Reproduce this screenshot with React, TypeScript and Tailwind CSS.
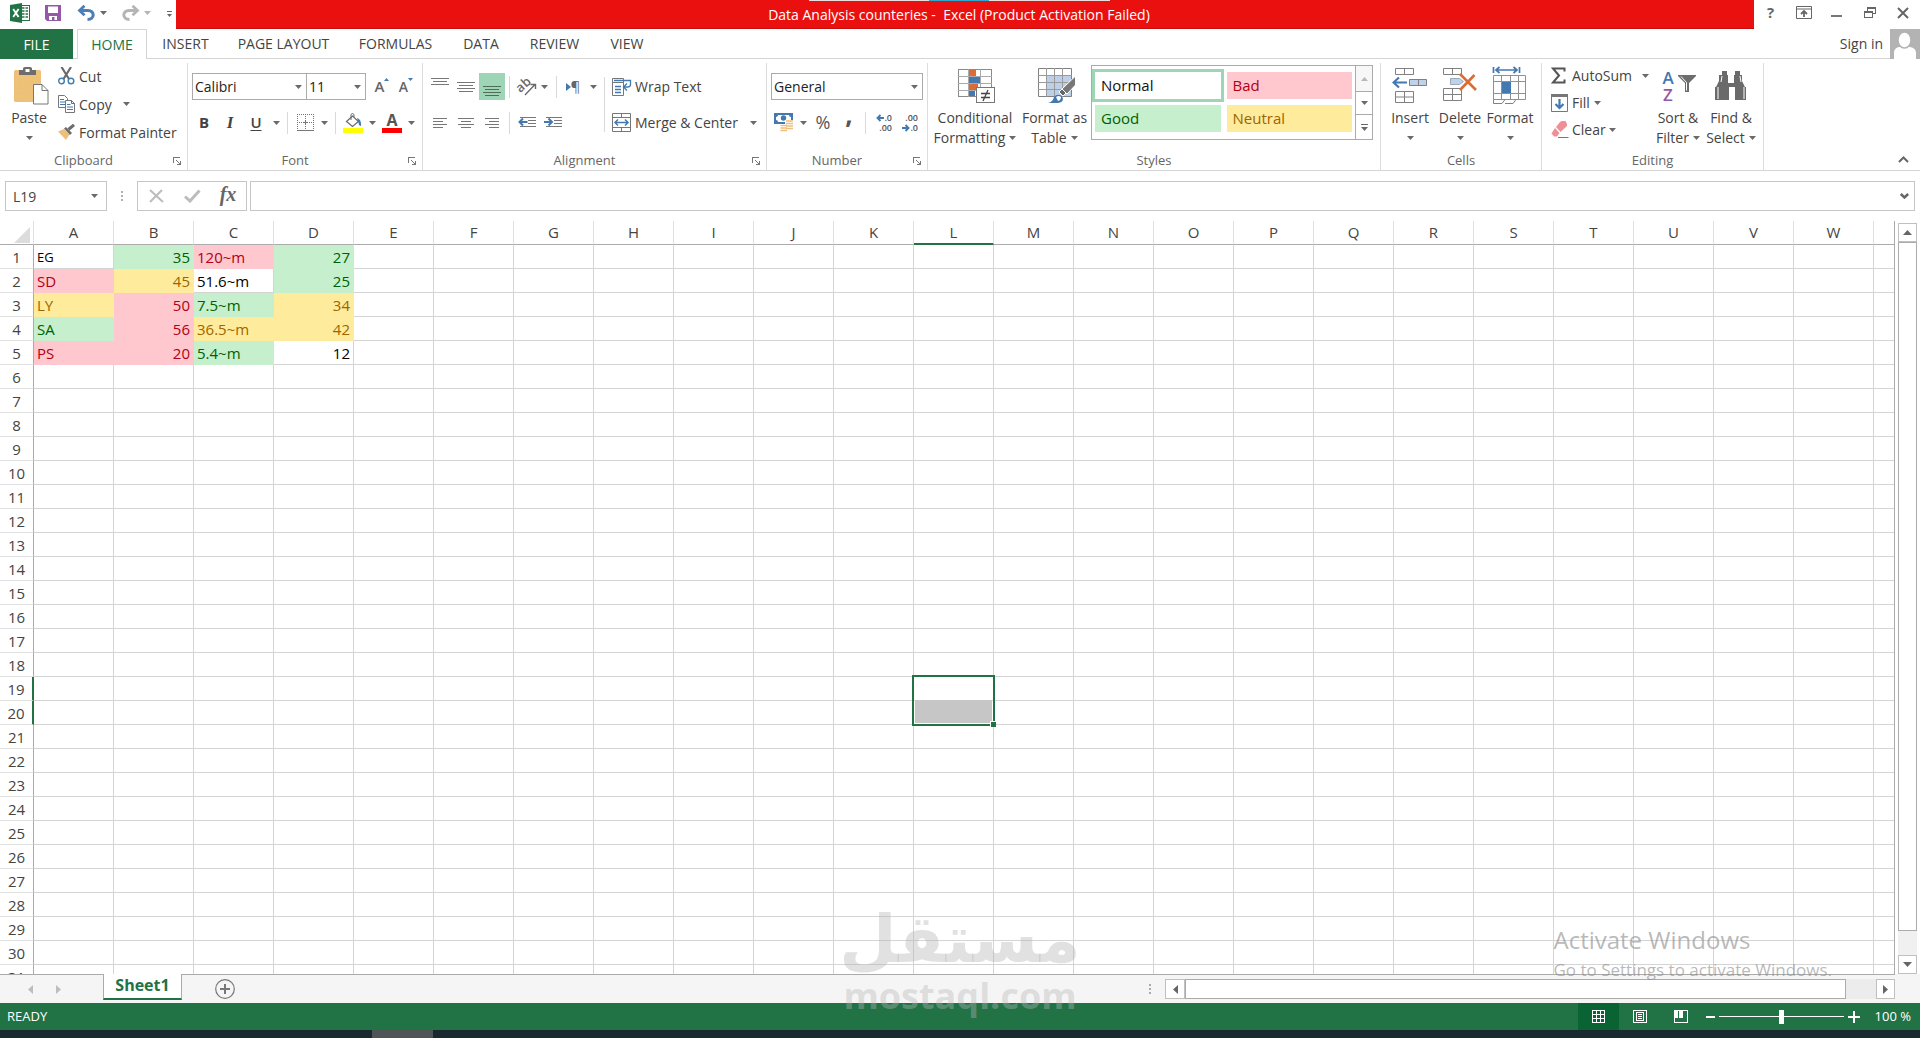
import type { ReactNode } from "react";

/* ---------- small shared pieces ---------- */

const Caret = ({ className = "text-[#6a6a6a]" }: { className?: string }) => (
  <svg width="7" height="4" viewBox="0 0 7 4" className={`shrink-0 ${className}`} aria-hidden="true">
    <path d="M0 0h7L3.5 4z" fill="currentColor" />
  </svg>
);

const Sep = ({ className = "" }: { className?: string }) => (
  <span className={`h-[22px] w-px shrink-0 bg-[#d9d9d9] ${className}`} />
);

const IconButton = ({ label, className = "w-[26px]", children }: { label: string; className?: string; children: ReactNode }) => (
  <button type="button" aria-label={label} className={`flex h-[27px] shrink-0 items-center justify-center ${className}`}>
    {children}
  </button>
);

const Group = ({ title, className, launcher = true, children }: { title: string; className: string; launcher?: boolean; children: ReactNode }) => (
  <section aria-label={title} className={`flex shrink-0 flex-col pt-1 ${className}`}>
    <div className="flex flex-1 border-r border-[#dcdcdc]">{children}</div>
    <div className="flex h-[22px] items-center border-r border-[#dcdcdc] pt-1 text-[13px] text-[#666]">
      <span className="flex-1 text-center">{title}</span>
      {launcher && (
        <button type="button" aria-label={`${title} settings`} className="flex w-5 justify-center">
          <svg width="8" height="8" viewBox="0 0 8 8" shapeRendering="crispEdges" stroke="#777" fill="none">
            <path d="M0 .5h7M.5 0v6M3 3l4 4M7.5 4v4M4 7.5h4" />
          </svg>
        </button>
      )}
    </div>
  </section>
);

const BigButton = ({ icon, line1, line2, className }: { icon: ReactNode; line1: string; line2?: string; className: string }) => (
  <button type="button" className={`flex shrink-0 flex-col items-center text-[14px] leading-5 whitespace-nowrap text-[#444] ${className}`}>
    <span className="flex h-[45px] items-center justify-center">{icon}</span>
    <span>{line1}</span>
    <span className="flex h-5 items-center gap-1">
      {line2}
      <Caret />
    </span>
  </button>
);

const Combo = ({ label, value, className }: { label: string; value: string; className: string }) => (
  <span className={`relative flex h-[27px] shrink-0 border border-[#ababab] bg-white ${className}`}>
    <select aria-label={label} defaultValue={value} className="w-full appearance-none bg-transparent pl-0.5 text-[14px] text-[#222] outline-none">
      <option>{value}</option>
    </select>
    <Caret className="pointer-events-none absolute top-[11px] right-1 text-[#6a6a6a]" />
  </span>
);

/* ---------- drawings ---------- */

const ExcelLogo = () => (
  <svg width="20" height="20" viewBox="0 0 20 20" aria-hidden="true">
    <rect x="10.5" y="2.5" width="9" height="15" fill="#fff" stroke="#217346" />
    <path d="M12 5h2.500M12 8h2.500M12 11h2.500M12 14h2.500M15.500 5H18M15.500 8H18M15.500 11H18M15.500 14H18" stroke="#217346" strokeWidth="1.600" />
    <path d="M0 2 12 0v20L0 18z" fill="#217346" />
    <path d="M3.200 6 8.600 14M8.600 6 3.200 14" stroke="#fff" strokeWidth="1.900" />
  </svg>
);

const SaveIcon = () => (
  <svg width="16" height="16" viewBox="0 0 16 16" aria-hidden="true">
    <path d="M0 0h16v16H2l-2-2z" fill="#9557a8" />
    <path d="M3 1.500h10V8H3zM4 11h8v4H9.500v-3H7v3H4z" fill="#fff" />
  </svg>
);

const UndoIcon = ({ color, flip = false }: { color: string; flip?: boolean }) => (
  <svg width="19" height="16" viewBox="0 0 19 16" aria-hidden="true" className={flip ? "-scale-x-100" : ""}>
    <path d="M2.500 5.500h8.500c7 0 7 9-0.500 9" fill="none" stroke={color} strokeWidth="3" />
    <path d="M7.500.8 2.500 5.500l5 4.700" fill="none" stroke={color} strokeWidth="2.800" />
  </svg>
);

const PasteIcon = () => (
  <svg width="35" height="38" viewBox="0 0 35 38" className="ml-1" aria-hidden="true">
    <rect x="0" y="3" width="27" height="32" rx="1.500" fill="#efc07a" />
    <path d="M3 9h22M3 14h22M3 19h22M3 24h15M3 29h15" stroke="#e2cf62" strokeWidth="1.500" strokeDasharray="1.500 4" />
    <path d="M5 3h4V1.500Q9 0 11 0h5q2 0 2 1.500V3h4v5H5z" fill="#6d6d6d" />
    <rect x="11.500" y="2" width="4" height="3" fill="#fff" />
    <path d="M19.500 17.500h8.500l6 6v13.500H19.500z" fill="#fff" stroke="#777" />
    <path d="M28 17.500v6h6" fill="none" stroke="#777" />
  </svg>
);

const CutIcon = () => (
  <svg width="17" height="18" viewBox="0 0 17 18" fill="none" aria-hidden="true">
    <path d="M3.500 0 11 12M13 0 5.500 12" stroke="#6a6a6a" strokeWidth="2.200" />
    <circle cx="3.500" cy="14" r="2.800" stroke="#3e7fae" strokeWidth="1.400" />
    <circle cx="13" cy="14" r="2.800" stroke="#3e7fae" strokeWidth="1.400" />
  </svg>
);

const CopyIcon = () => (
  <svg width="17" height="18" viewBox="0 0 17 18" aria-hidden="true">
    <path d="M.5.5h6l3 3v9h-9z" fill="#fff" stroke="#777" />
    <path d="M2 4.500h4M2 7h5M2 9.500h5" stroke="#4478b0" />
    <path d="M7.500 5.500h6l3 3v9h-9z" fill="#fff" stroke="#777" />
    <path d="M13.500 5.500v3h3M9 9.500h3.500M9 12h6M9 14.500h6" stroke="#4478b0" fill="none" />
  </svg>
);

const PainterIcon = () => (
  <svg width="17" height="16" viewBox="0 0 17 16" aria-hidden="true">
    <path d="M0 7.500 6 5l5.500 5.500L8 16z" fill="#eebf78" />
    <path d="M6 4.500 8 3l6 6-2 2z" fill="#6d6d6d" />
    <path d="M10.500 5.500 16 .8" stroke="#6d6d6d" strokeWidth="3" />
  </svg>
);

const BordersIcon = () => (
  <svg width="17" height="17" viewBox="0 0 17 17" shapeRendering="crispEdges" stroke="#777" aria-hidden="true">
    <path d="M0 .5h17M.5 0v16M16.500 0v16M0 8.500h17M8.500 0v16" strokeDasharray="1 1" />
    <path d="M0 16.500h17M7 8.500h3M8.500 7v3" />
  </svg>
);

const FillColorIcon = () => (
  <svg width="20" height="20" viewBox="0 0 20 20" aria-hidden="true">
    <path d="M3.500 8.500 9.500 3l6 5.500-6 5z" fill="#fff" stroke="#6a6a6a" strokeWidth="1.200" />
    <path d="M8 7V1.500Q9.500-.5 11 1.500V4" fill="none" stroke="#6a6a6a" />
    <path d="M14 5q4.500 1 4 8-2 0-2.500-3z" fill="#4478b0" />
    <path d="M0 15h20v5H0z" fill="#ff0" />
  </svg>
);

const Lines = ({ d, active = false }: { d: string; active?: boolean }) => (
  <svg width="18" height="18" viewBox="0 0 18 18" shapeRendering="crispEdges" stroke={active ? "#4f6b5c" : "#777"} aria-hidden="true">
    <path d={d} />
  </svg>
);

const OrientationIcon = () => (
  <svg width="20" height="19" viewBox="0 0 20 19" className="overflow-visible" aria-hidden="true">
    <text x="1" y="14" transform="rotate(-42 5 12)" fontSize="13" fontWeight="600" fill="#6a6a6a">ab</text>
    <path d="M8 18 18 7.500M13.500 7.500H18.500V12" fill="none" stroke="#6a6a6a" strokeWidth="1.400" />
  </svg>
);

const IndentIcon = ({ out = false }: { out?: boolean }) => (
  <svg width="19" height="12" viewBox="0 0 19 12" aria-hidden="true">
    <path d="M2 .5h16M10 3.500h8M10 6.500h8M2 9.500h16" stroke="#777" shapeRendering="crispEdges" />
    <path d={out ? "M1.500 5h8M5 1.500 1.500 5 5 8.500" : "M0 5h8M4.500 1.500 8 5 4.500 8.500"} stroke="#4478b0" strokeWidth="2" fill="none" />
  </svg>
);

const WrapIcon = () => (
  <svg width="20" height="18" viewBox="0 0 20 18" fill="none" aria-hidden="true">
    <path d="M.5 .5h11v4H.5zM.5 4.500h11v13H.5z" stroke="#777" />
    <path d="M2 2.500h16.500v4q0 2.500-3 2.500H12M15 5.500 11.500 9l3.500 3.500M3 8.500h6M3 11.500h6M3 14.500h6" stroke="#4478b0" strokeWidth="1.300" />
  </svg>
);

const MergeIcon = () => (
  <svg width="20" height="19" viewBox="0 0 20 19" fill="none" aria-hidden="true">
    <path d="M.5.5h18v18H.5zM.5 4.500h18M.5 14.500h18M9.500.5v4M9.500 14.500v4" stroke="#777" />
    <path d="M3 9.500h13M6 6.500l-3 3 3 3M13 6.500l3 3-3 3" stroke="#4478b0" strokeWidth="1.500" />
  </svg>
);

const MoneyIcon = () => (
  <svg width="20" height="19" viewBox="0 0 20 19" aria-hidden="true">
    <path d="M0 0h19v11H0z" fill="#4478b0" />
    <path d="M2 4q2 0 2-2h11q0 2 2 2v3q-2 0-2 2H4q0-2-2-2z" fill="#fff" />
    <circle cx="9.500" cy="5" r="2.700" fill="#4478b0" />
    <path d="M11 7h8v10h-5v2H6v-8h5z" fill="#fff" />
    <path d="M12 8h7M12 10.500h7M12 13h7M12 15.500h7M6.500 12.500H13M6.500 15H13M6.500 17.500H13" stroke="#efbf7b" strokeWidth="1.700" />
  </svg>
);

const DecimalIcon = ({ grow = false }: { grow?: boolean }) => {
  const arrow = (
    <svg width="8" height="8" viewBox="0 0 8 8" fill="none" stroke="#4478b0" strokeWidth="1.900" aria-hidden="true">
      <path d={grow ? "M1 4h7M4.500 1 1.500 4l3 3" : "M0 4h7M3.500 1l3 3-3 3"} />
    </svg>
  );
  return (
    <span className="flex w-[18px] flex-col text-[9px] leading-[10px] font-semibold text-[#555]">
      <span className="flex items-center justify-end">{grow && arrow}{grow ? ".0" : ".00"}</span>
      <span className="flex items-center justify-end">{!grow && arrow}{grow ? ".00" : ".0"}</span>
    </span>
  );
};

const ConditionalIcon = () => (
  <svg width="38" height="36" viewBox="0 0 38 36" shapeRendering="crispEdges" className="ml-1" aria-hidden="true">
    <path d="M.5 1.500h33v27H.5z" fill="#fff" stroke="#8a8a8a" />
    <path d="M0 8.500h34M0 15.500h34M0 22.500h34M10.500 1v28M22.500 1v28" stroke="#aaa" />
    <path d="M11 2h7v6h-7zM11 16h9v6h-9z" fill="#dc6b35" />
    <path d="M11 9h11v6H11zM11 23h6v5h-6z" fill="#4478b0" />
    <path d="M18.500 19.500h18v15h-18z" fill="#fff" stroke="#777" />
    <path d="M23 25.500h9M23 29.500h9M30 22l-5 11" stroke="#444" strokeWidth="1.300" shapeRendering="auto" />
  </svg>
);

const TableIcon = () => (
  <svg width="38" height="36" viewBox="0 0 38 36" className="ml-1" aria-hidden="true">
    <path d="M.5.5h33v28H.5z" fill="#fff" stroke="#808080" />
    <path d="M9 8h24v20H9z" fill="#bdd0e9" />
    <path d="M0 7.500h34M0 14.500h34M0 21.500h34M8.500 0v29M16.500 0v29M24.500 0v29" stroke="#9a9a9a" />
    <path d="M37.500 8v9L29 26l-5-5z" fill="#777" stroke="#fff" />
    <path d="M24 21l4 4-3 3-4-4z" fill="#666" stroke="#fff" />
    <path d="M10 35q5-1 6-6 3-4 8-1 3 6-4 7z" fill="#4478b0" />
    <path d="M18 29q3-2 5 0 0 3-3 4z" fill="#fff" />
  </svg>
);

const InsertCellsIcon = () => (
  <svg width="36" height="38" viewBox="0 0 36 38" fill="none" aria-hidden="true">
    <path d="M3.500 1.500h18v6h-18zM12.500 1.500v6M3.500 24.500h18v11h-18zM12.500 24.500v11M3.500 30h18" stroke="#808080" />
    <path d="M17.500 12.500h17v6h-17z" fill="#bfd2ea" stroke="#808080" />
    <path d="M26.500 12.500v6" stroke="#808080" />
    <path d="M1.500 15.500H15M7 10.500l-5.500 5 5.500 5" stroke="#4478b0" strokeWidth="2.200" />
  </svg>
);

const DeleteCellsIcon = () => (
  <svg width="36" height="38" viewBox="0 0 36 38" fill="none" aria-hidden="true">
    <path d="M1.500 1.500h18v6h-18zM10.500 1.500v6M1.500 21.500h18v12h-18zM10.500 21.500v12M1.500 27.500h18" stroke="#808080" />
    <path d="M8.500 11.500h9l4 3-4 3h-9z" fill="#bfd2ea" stroke="#9aa9ba" />
    <path d="M18 7 34 23M32.500 8 18 23" stroke="#dc6b35" strokeWidth="2.600" />
  </svg>
);

const FormatCellsIcon = () => (
  <svg width="36" height="40" viewBox="0 0 36 40" fill="none" aria-hidden="true">
    <path d="M1.500 1v6M27.500 1v6M4 4h21M7.500 1 4 4l3.500 3M21.500 1 25 4l-3.500 3" stroke="#4478b0" strokeWidth="1.700" />
    <path d="M1.500 9.500h32v24h-32zM1.500 15.500h32M1.500 27.500h32M9.500 9.500v24M18.500 9.500v24M26.500 9.500v24" stroke="#909090" />
    <path d="M10 16h9v11h-9z" fill="#4478b0" />
    <path d="M1.500 33.500v4H10l3-4M13 37.500h8l3-4" stroke="#808080" />
  </svg>
);

const SigmaIcon = () => (
  <svg width="16" height="17" viewBox="0 0 16 17" aria-hidden="true">
    <path d="M13.500 4.500V1.500H2l6 7-6 7h11.500v-3" fill="none" stroke="#555" strokeWidth="2" />
  </svg>
);

const FillDownIcon = () => (
  <svg width="17" height="18" viewBox="0 0 17 18" fill="none" aria-hidden="true">
    <path d="M.5.5h16v17H.5z" stroke="#777" />
    <path d="M0 1.500h17" stroke="#777" strokeWidth="3" />
    <path d="M8.500 5v9M4.500 10l4 4 4-4" stroke="#4478b0" strokeWidth="2.200" />
  </svg>
);

const EraserIcon = () => (
  <svg width="18" height="17" viewBox="0 0 18 17" aria-hidden="true">
    <path d="M9 1q1-1 2.500-1h3L16 3v2L9.500 11 5 6z" fill="#ee9096" />
    <path d="M4 7l4.500 5L6 15.500H3L.5 12.500z" fill="#ee9096" />
    <path d="M7 16.500h10.500" stroke="#777" />
  </svg>
);

const SortIcon = () => (
  <span className="flex items-center gap-0.5">
    <span className="flex w-4 flex-col text-center text-[17px] leading-[17px] font-semibold">
      <span className="text-[#4478b0]">A</span>
      <span className="text-[#9557a8]">Z</span>
    </span>
    <svg width="18" height="17" viewBox="0 0 18 17" className="mb-1" aria-hidden="true">
      <path d="M0 0h18v1l-7 7v9H7V8L0 1z" fill="#6d6d6d" />
      <path d="M3 1.500 8.500 7.500v8" stroke="#fff" fill="none" />
    </svg>
  </span>
);

const BinocularsIcon = () => (
  <svg width="34" height="32" viewBox="0 0 34 32" fill="#6a6a6a" aria-hidden="true">
    <path d="M8 1h5v4h1v8h6V5h1V1h5v4h2v6l3 6h1v13h-11V17h-6v13H1V17h1l3-6V5h3z" />
    <path d="M4 17v12M30 17v12M8 6l-1 6M26 6l1 6M15 11.500h4" stroke="#fff" fill="none" />
  </svg>
);

/* ---------- title bar and tabs ---------- */

const TitleBar = () => (
  <header className="flex h-[29px] shrink-0 bg-white">
    <div className="flex w-44 shrink-0 items-center pb-1 pl-2.5">
      <ExcelLogo />
      <button type="button" aria-label="Save" className="ml-[15px]"><SaveIcon /></button>
      <button type="button" aria-label="Undo" className="ml-4 flex items-center gap-1"><UndoIcon color="#4b7eb8" /><Caret /></button>
      <button type="button" aria-label="Redo" className="ml-3.5 flex items-center gap-1"><UndoIcon color="#b5b5b5" flip /><Caret className="text-[#b5b5b5]" /></button>
      <button type="button" aria-label="Customize toolbar" className="ml-4 flex flex-col items-center gap-0.5 pt-0.5">
        <span className="h-px w-[5px] bg-[#666]" />
        <svg width="5" height="3" viewBox="0 0 5 3" aria-hidden="true"><path d="M0 0h5L2.500 3z" fill="#666" /></svg>
      </button>
    </div>
    <div className="relative flex flex-1 items-center justify-center border-b border-[#c60d0d] bg-[#eb1010] pr-3 text-[14px] whitespace-pre text-white">
      <div className="absolute inset-x-0 top-0 flex h-px justify-center pr-3">
        <span className="w-[120px] bg-[#ecdcdc]" />
        <span className="w-[60px] bg-[#2fa8cf]" />
        <span className="w-[121px] bg-[#ecdcdc]" />
      </div>
      <h1>{"Data Analysis counteries -  Excel (Product Activation Failed)"}</h1>
    </div>
    <div className="flex w-[166px] shrink-0 items-center pb-1 text-[#666]">
      <button type="button" aria-label="Help" className="w-[33px] text-[15px] leading-none font-bold">?</button>
      <button type="button" aria-label="Ribbon display options" className="flex w-[33px] justify-center">
        <svg width="16" height="13" viewBox="0 0 16 13" fill="none" stroke="#666" aria-hidden="true">
          <path d="M.5.5h15v12H.5zM.5 3h15" /><path d="M8 11V5.500M5 8l3-3 3 3" strokeWidth="1.800" />
        </svg>
      </button>
      <button type="button" aria-label="Minimize" className="flex w-[33px] justify-center pt-1.5"><span className="h-0.5 w-[11px] bg-[#777]" /></button>
      <button type="button" aria-label="Restore" className="flex w-[33px] justify-center">
        <svg width="12" height="11" viewBox="0 0 12 11" fill="none" stroke="#666" shapeRendering="crispEdges" aria-hidden="true">
          <path d="M.5 4.500h8v6h-8zM0 5.500h9M3.500 4V.5h8v6H9M3 1.500h9" />
        </svg>
      </button>
      <button type="button" aria-label="Close" className="flex w-[33px] justify-center">
        <svg width="12" height="12" viewBox="0 0 12 12" stroke="#666" strokeWidth="2" aria-hidden="true"><path d="M1 1l10 10M11 1 1 11" /></svg>
      </button>
    </div>
  </header>
);

const tabs = [
  { name: "INSERT", width: "w-[77px]" },
  { name: "PAGE LAYOUT", width: "w-[119px]" },
  { name: "FORMULAS", width: "w-[105px]" },
  { name: "DATA", width: "w-[66px]" },
  { name: "REVIEW", width: "w-[81px]" },
  { name: "VIEW", width: "w-[64px]" },
];

const TabBar = () => (
  <nav className="flex h-[30px] shrink-0 text-[14px] text-[#444]">
    <button type="button" className="w-[73px] bg-[#217346] text-white">FILE</button>
    <span className="w-1 border-b border-[#d5d5d5]" />
    <button type="button" className="w-[70px] border-x border-t border-[#d5d5d5] pb-px text-[#217346]">HOME</button>
    {tabs.map((t) => (
      <button type="button" key={t.name} className={`border-b border-[#d5d5d5] whitespace-nowrap ${t.width}`}>{t.name}</button>
    ))}
    <span className="flex-1 border-b border-[#d5d5d5]" />
    <button type="button" className="border-b border-[#d5d5d5] pr-[7px]">Sign in</button>
    <svg width="30" height="30" viewBox="0 0 30 30" role="img" aria-label="Account">
      <path d="M0 0h30v30H0z" fill="#b3b3b3" />
      <path d="M4 30v-6q0-5 5-6h11q6 1 6 6v6z" fill="#fff" />
      <ellipse cx="14.500" cy="11" rx="6.500" ry="8" fill="#fff" stroke="#b3b3b3" strokeWidth="1.500" />
    </svg>
  </nav>
);

/* ---------- ribbon ---------- */

const Ribbon = () => (
  <div className="flex h-28 shrink-0 border-b border-[#d5d5d5] text-[14px] text-[#444]">
    <Group title="Clipboard" className="w-[188px]">
      <BigButton className="w-[58px]" icon={<PasteIcon />} line1="Paste" />
      <div className="flex flex-col whitespace-nowrap">
        <button type="button" className="flex h-7 items-center gap-1 pb-0.5"><CutIcon />Cut</button>
        <button type="button" className="flex h-7 items-center gap-1 pb-0.5"><CopyIcon />Copy<span className="w-[3px]" /><Caret /></button>
        <button type="button" className="flex h-7 items-center gap-1 pb-0.5"><PainterIcon />Format Painter</button>
      </div>
    </Group>

    <Group title="Font" className="w-[235px]">
      <div className="flex flex-col gap-[9px] pt-2.5 pl-1">
        <div className="flex">
          <Combo label="Font" value="Calibri" className="w-[115px]" />
          <Combo label="Font size" value="11" className="-ml-px w-[60px]" />
          <IconButton label="Increase font size" className="ml-1 w-6">
            <span className="text-[15px] leading-none font-semibold text-[#666]">A</span>
            <svg width="5" height="3" viewBox="0 0 5 3" className="mb-3.5"><path d="M0 3h5L2.500 0z" fill="#4478b0" /></svg>
          </IconButton>
          <IconButton label="Decrease font size" className="w-6">
            <span className="text-[14px] leading-none font-semibold text-[#666]">A</span>
            <svg width="5" height="3" viewBox="0 0 5 3" className="mb-3.5"><path d="M0 0h5L2.500 3z" fill="#4478b0" /></svg>
          </IconButton>
        </div>
        <div className="flex items-center">
          <IconButton label="Bold" className="w-6 text-[15px] font-bold">B</IconButton>
          <IconButton label="Italic" className="w-7 font-[Liberation_Serif] text-[17px] font-bold italic">I</IconButton>
          <IconButton label="Underline" className="w-6 text-[15px] font-semibold underline underline-offset-2">U</IconButton>
          <IconButton label="Underline options" className="w-4"><Caret /></IconButton>
          <Sep className="mx-[3px]" />
          <IconButton label="Borders" className="w-7"><BordersIcon /></IconButton>
          <IconButton label="Border options" className="w-2.5"><Caret /></IconButton>
          <Sep className="mr-[3px] ml-1.5" />
          <IconButton label="Fill color" className="w-7"><FillColorIcon /></IconButton>
          <IconButton label="Fill color options" className="w-2.5"><Caret /></IconButton>
          <IconButton label="Font color" className="w-[30px] flex-col">
            <span className="text-[16px] leading-[15px] font-bold text-[#555]">A</span>
            <span className="h-[5px] w-5 bg-[#f00]" />
          </IconButton>
          <IconButton label="Font color options" className="w-2"><Caret /></IconButton>
        </div>
      </div>
    </Group>

    <Group title="Alignment" className="w-[344px]">
      <div className="flex w-[181px] flex-col gap-[9px] pt-2.5 pl-1">
        <div className="flex items-center">
          <IconButton label="Top align"><Lines d="M0 .5h18M2 3.500h14M0 6.500h18" /></IconButton>
          <IconButton label="Middle align"><Lines d="M0 4.500h18M2 7.500h14M0 10.500h18M2 13.500h14" /></IconButton>
          <IconButton label="Bottom align" className="w-[26px] bg-[#9fd5b7]"><Lines active d="M0 8.500h18M2 11.500h14M0 14.500h18M2 17.500h14" /></IconButton>
          <Sep className="ml-1" />
          <IconButton label="Orientation" className="ml-1 w-[26px]"><OrientationIcon /></IconButton>
          <IconButton label="Orientation options" className="w-2"><Caret /></IconButton>
          <Sep className="ml-2" />
          <IconButton label="Text direction" className="ml-1 w-6">
            <svg width="5" height="8" viewBox="0 0 5 8"><path d="M0 0v8l5-4z" fill="#4478b0" /></svg>
            <span className="text-[15px] leading-none text-[#666]">¶</span>
          </IconButton>
          <IconButton label="Text direction options" className="ml-1 w-2"><Caret /></IconButton>
        </div>
        <div className="flex items-center">
          <IconButton label="Align left"><Lines d="M2 4.500h14M2 7.500h10M2 10.500h14M2 13.500h10" /></IconButton>
          <IconButton label="Center"><Lines d="M1 4.500h16M4 7.500h10M1 10.500h16M4 13.500h10" /></IconButton>
          <IconButton label="Align right"><Lines d="M2 4.500h14M6 7.500h10M2 10.500h14M6 13.500h10" /></IconButton>
          <Sep className="ml-1" />
          <IconButton label="Decrease indent" className="ml-1 w-[26px]"><IndentIcon out /></IconButton>
          <IconButton label="Increase indent"><IndentIcon /></IconButton>
        </div>
      </div>
      <Sep className="mt-3.5 h-[55px]" />
      <div className="flex flex-col gap-[9px] pt-2.5 pl-[7px] whitespace-nowrap">
        <button type="button" className="flex h-[27px] items-center gap-[3px]"><WrapIcon />Wrap Text</button>
        <button type="button" className="flex h-[27px] items-center gap-[3px]"><MergeIcon />Merge &amp; Center<span className="w-1.5" /><Caret /></button>
      </div>
    </Group>

    <Group title="Number" className="w-[161px]">
      <div className="flex flex-col gap-[9px] pt-2.5 pl-1">
        <Combo label="Number format" value="General" className="w-[152px]" />
        <div className="flex items-center">
          <IconButton label="Accounting format"><MoneyIcon /></IconButton>
          <IconButton label="Accounting options" className="w-3"><Caret /></IconButton>
          <IconButton label="Percent style" className="w-7 text-[18px] text-[#555]">%</IconButton>
          <IconButton label="Comma style" className="w-6 pb-4 text-[26px] font-bold text-[#555]">,</IconButton>
          <Sep className="mr-1 ml-1" />
          <IconButton label="Increase decimal"><DecimalIcon grow /></IconButton>
          <IconButton label="Decrease decimal"><DecimalIcon /></IconButton>
        </div>
      </div>
    </Group>

    <Group title="Styles" launcher={false} className="w-[453px]">
      <BigButton className="ml-px w-[92px]" icon={<ConditionalIcon />} line1="Conditional" line2="Formatting" />
      <BigButton className="w-[67px]" icon={<TableIcon />} line1="Format as" line2="Table" />
      <div className="mt-0.5 ml-[3px] flex h-[75px] w-[282px] border border-[#ababab]">
        <div className="grid flex-1 grid-cols-2 grid-rows-[33px_33px] pt-[3px] text-[15px]">
          <button type="button" className="border-3 border-[#9fd5b7] bg-white pl-1.5 text-left text-[#111]">Normal</button>
          <button type="button" className="m-[3px] bg-[#ffc7ce] pl-1.5 text-left text-[#b00014]">Bad</button>
          <button type="button" className="m-[3px] bg-[#c6efce] pl-1.5 text-left text-[#006100]">Good</button>
          <button type="button" className="m-[3px] bg-[#ffeb9c] pl-1.5 text-left text-[#9c6500]">Neutral</button>
        </div>
        <div className="flex w-[17px] flex-col border-l border-[#ababab]">
          <button type="button" aria-label="Previous styles" className="flex h-[25px] items-center justify-center bg-[#f7f7f7]"><Caret className="rotate-180 text-[#b8b8b8]" /></button>
          <button type="button" aria-label="Next styles" className="flex h-6 items-center justify-center border-y border-[#ababab]"><Caret /></button>
          <button type="button" aria-label="More styles" className="flex flex-1 flex-col items-center justify-center gap-0.5">
            <span className="h-px w-[7px] bg-[#6a6a6a]" />
            <Caret />
          </button>
        </div>
      </div>
    </Group>

    <Group title="Cells" launcher={false} className="w-[161px]">
      <BigButton className="w-[58px]" icon={<InsertCellsIcon />} line1="Insert" />
      <BigButton className="w-[42px]" icon={<DeleteCellsIcon />} line1="Delete" />
      <BigButton className="w-[58px]" icon={<FormatCellsIcon />} line1="Format" />
    </Group>

    <Group title="Editing" launcher={false} className="w-[222px]">
      <div className="flex w-[110px] flex-col pl-[9px] whitespace-nowrap">
        <button type="button" className="flex h-[27px] items-center gap-[5px] pb-0.5"><SigmaIcon />AutoSum<span /><Caret /></button>
        <button type="button" className="flex h-[27px] items-center gap-1 pb-0.5"><FillDownIcon />Fill<Caret /></button>
        <button type="button" className="flex h-[27px] items-center gap-[3px] pb-0.5"><EraserIcon />Clear<Caret /></button>
      </div>
      <BigButton className="w-[52px]" icon={<SortIcon />} line1="Sort &" line2="Filter" />
      <BigButton className="w-[54px]" icon={<BinocularsIcon />} line1="Find &" line2="Select" />
    </Group>

    <div className="flex flex-1 items-end justify-end pr-[11px] pb-[7px]">
      <button type="button" aria-label="Collapse the ribbon">
        <svg width="11" height="7" viewBox="0 0 11 7" fill="none" stroke="#666" strokeWidth="2" aria-hidden="true"><path d="M1 6l4.500-4.500L10 6" /></svg>
      </button>
    </div>
  </div>
);

/* ---------- formula bar ---------- */

const FormulaBar = () => (
  <div className="flex h-[50px] shrink-0 items-start pt-2.5 pr-[5px] pl-[5px] text-[14px] text-[#444]">
    <div className="flex h-[30px] w-[102px] items-center border border-[#c6c6c6] pr-2">
      <input aria-label="Name box" defaultValue="L19" className="w-full min-w-0 pl-[7px] outline-none" />
      <Caret />
    </div>
    <svg width="30" height="30" viewBox="0 0 30 30" aria-hidden="true" fill="#b0b0b0"><path d="M14 10h2v2h-2zM14 14h2v2h-2zM14 18h2v2h-2z" /></svg>
    <div className="flex h-[30px] w-[110px] items-center border border-[#c6c6c6]">
      <button type="button" aria-label="Cancel" className="flex w-9 justify-center">
        <svg width="15" height="14" viewBox="0 0 15 14" stroke="#bcbcbc" strokeWidth="2" aria-hidden="true"><path d="M1 1l13 12M13 1 1 13" /></svg>
      </button>
      <button type="button" aria-label="Enter" className="flex w-9 justify-center">
        <svg width="17" height="14" viewBox="0 0 17 14" stroke="#bcbcbc" strokeWidth="3" fill="none" aria-hidden="true"><path d="M1 7.500 6 12 15.500 1.500" /></svg>
      </button>
      <button type="button" aria-label="Insert function" className="w-9 pb-1 font-[Liberation_Serif] text-[20px] leading-none font-bold text-[#666] italic">fx</button>
    </div>
    <div className="ml-[3px] flex h-[30px] flex-1 items-center border border-[#c6c6c6] pr-[5px]">
      <input aria-label="Formula bar" className="w-full min-w-0 px-2 outline-none" />
      <svg width="9" height="6" viewBox="0 0 9 6" fill="none" stroke="#666" strokeWidth="2.500" aria-hidden="true"><path d="M.8 1 4.500 4.500 8.200 1" /></svg>
    </div>
  </div>
);

/* ---------- worksheet ---------- */

type Tone = "plain" | "good" | "bad" | "neutral";
const toneClass: Record<Tone, string> = {
  plain: "border-[#d4d4d4] text-black",
  good: "border-[#c6efce] bg-[#c6efce] text-[#006100]",
  bad: "border-[#ffc7ce] bg-[#ffc7ce] text-[#b00014]",
  neutral: "border-[#ffeb9c] bg-[#ffeb9c] text-[#9c6500]",
};

const data: [string, Tone][][] = [
  [["EG", "plain"], ["35", "good"], ["120~m", "bad"], ["27", "good"]],
  [["SD", "bad"], ["45", "neutral"], ["51.6~m", "plain"], ["25", "good"]],
  [["LY", "neutral"], ["50", "bad"], ["7.5~m", "good"], ["34", "neutral"]],
  [["SA", "good"], ["56", "bad"], ["36.5~m", "neutral"], ["42", "neutral"]],
  [["PS", "bad"], ["20", "bad"], ["5.4~m", "good"], ["12", "plain"]],
];

const columns = "ABCDEFGHIJKLMNOPQRSTUVWX".split("");
const rows = Array.from({ length: 31 }, (_, i) => i + 1);

const Selection = () => (
  <span className="absolute -top-0.5 -left-0.5 z-10 flex h-[51px] w-[83px] flex-col justify-end border-2 border-[#217346] p-px">
    <span className="h-[23px] bg-[#c6c6c6]" />
    <span className="absolute -right-[3px] -bottom-[3px] size-1.5 border-t border-l border-white bg-[#217346]" />
  </span>
);

const Sheet = () => (
  <div className="min-w-0 flex-1 overflow-hidden border-r border-[#ababab]">
    <table className="w-px table-fixed border-separate border-spacing-0 text-[15px] leading-[22px]">
      <colgroup>
        <col className="w-[34px]" />
        {columns.map((c) => <col key={c} className="w-20" />)}
      </colgroup>
      <thead>
        <tr className="h-6">
          <th className="border-r border-b border-r-[#e0e0e0] border-b-[#ababab] p-0">
            <svg width="16" height="16" viewBox="0 0 16 16" className="mt-1 ml-3.5" aria-hidden="true"><path d="M16 0v16H0z" fill="#dcdcdc" /></svg>
          </th>
          {columns.map((c) => (
            <th
              key={c}
              scope="col"
              className={c === "L"
                ? "border-r border-b-2 border-r-[#e0e0e0] border-b-[#217346] p-0 align-top font-normal text-[#444]"
                : "border-r border-b border-r-[#e0e0e0] border-b-[#ababab] p-0 align-top font-normal text-[#444]"}
            >
              {c === "X" ? "" : c}
            </th>
          ))}
        </tr>
      </thead>
      <tbody>
        {rows.map((r) => (
          <tr key={r} className="h-6">
            <th
              scope="row"
              className={r === 19 || r === 20
                ? "border-r-2 border-b border-r-[#217346] border-b-[#e0e0e0] p-0 align-bottom font-normal text-[#444]"
                : "border-r border-b border-r-[#ababab] border-b-[#e0e0e0] p-0 align-bottom font-normal text-[#444]"}
            >
              {r}
            </th>
            {columns.map((c, i) => {
              const cell = data[r - 1]?.[i];
              const tone: Tone = cell ? cell[1] : "plain";
              return (
                <td
                  key={c}
                  className={`relative border-r border-b p-0 px-[3px] align-bottom ${toneClass[tone]} ${i % 2 ? "text-right" : "text-left"}`}
                >
                  {cell && (cell[0] === "EG" ? <span className="text-[13px]">EG</span> : cell[0])}
                  {c === "L" && r === 19 && <Selection />}
                </td>
              );
            })}
          </tr>
        ))}
      </tbody>
    </table>
  </div>
);

const Arrow = ({ className = "text-[#666]", d, w, h }: { className?: string; d: string; w: number; h: number }) => (
  <svg width={w} height={h} viewBox={`0 0 ${w} ${h}`} className={className} aria-hidden="true"><path d={d} fill="currentColor" /></svg>
);

const VerticalScroll = () => (
  <div className="flex w-[25px] shrink-0 flex-col bg-white pt-0.5 pr-[3px] pl-[3px]">
    <button type="button" aria-label="Scroll up" className="flex h-[19px] items-center justify-center border border-[#c0c0c0]"><Arrow w={9} h={5} d="M0 5h9L4.500 0z" /></button>
    <div className="flex flex-1 flex-col bg-[#f0f0f0] pb-6"><span className="flex-1 border border-[#ababab] bg-white" /></div>
    <button type="button" aria-label="Scroll down" className="flex h-[19px] items-center justify-center border border-[#c0c0c0]"><Arrow w={9} h={5} d="M0 0h9L4.500 5z" /></button>
  </div>
);

const SheetBar = () => (
  <div className="flex h-[29px] shrink-0 bg-[#f5f5f5]">
    <div className="flex min-w-0 flex-1 border-t border-[#ababab]">
      <div className="flex w-[103px] shrink-0 items-center gap-[23px] pl-7">
        <button type="button" aria-label="Previous sheet"><Arrow w={5} h={9} d="M5 0v9L0 4.500z" className="text-[#bdbdbd]" /></button>
        <button type="button" aria-label="Next sheet"><Arrow w={5} h={9} d="M0 0v9l5-4.500z" className="text-[#bdbdbd]" /></button>
      </div>
      <button type="button" className="-mt-px h-[26px] w-[79px] shrink-0 border-x border-b-2 border-x-[#ababab] border-b-[#217346] bg-white pb-0.5 text-[16px] leading-none font-bold text-[#217346]">Sheet1</button>
      <button type="button" aria-label="New sheet" className="ml-[33px]">
        <svg width="20" height="20" viewBox="0 0 20 20" fill="none" stroke="#777" aria-hidden="true"><circle cx="10" cy="10" r="9.300" strokeWidth="1.200" /><path d="M10 5v10M5 10h10" strokeWidth="2" /></svg>
      </button>
      <span className="flex-1" />
      <svg width="16" height="28" viewBox="0 0 16 28" fill="#aaa" aria-hidden="true"><path d="M0 9h2v2H0zM0 13h2v2H0zM0 17h2v2H0z" /></svg>
    </div>
    <div className="flex w-[38%] shrink-0 border-t border-[#ababab] pt-1 pb-1">
      <button type="button" aria-label="Scroll left" className="flex w-5 shrink-0 items-center justify-center border border-[#c0c0c0] bg-white"><Arrow w={5} h={9} d="M5 0v9L0 4.500z" /></button>
      <div className="flex flex-1 bg-[#ececec] pr-[30px]"><span className="flex-1 border border-[#ababab] bg-white" /></div>
      <button type="button" aria-label="Scroll right" className="flex w-[19px] shrink-0 items-center justify-center border border-[#c0c0c0] bg-white"><Arrow w={5} h={9} d="M0 0v9l5-4.500z" /></button>
    </div>
    <span className="w-[25px] shrink-0" />
  </div>
);

const StatusBar = () => (
  <footer className="flex h-[27px] shrink-0 items-center bg-[#217346] text-[13px] text-white">
    <span className="flex-1 pl-[7px]">READY</span>
    <button type="button" aria-label="Normal view" className="flex h-full w-[41px] items-center justify-center bg-[#0a6332]">
      <svg width="13" height="13" viewBox="0 0 13 13" fill="none" stroke="#fff" shapeRendering="crispEdges"><path d="M.5.5h12v12H.5zM4.500 0v13M8.500 0v13M0 4.500h13M0 8.500h13" /></svg>
    </button>
    <button type="button" aria-label="Page layout view" className="flex h-full w-[41px] items-center justify-center">
      <svg width="14" height="13" viewBox="0 0 14 13" fill="none" stroke="#fff" shapeRendering="crispEdges"><path d="M.5.5h13v12H.5zM3.500 2.500h7v8h-7zM5 4.500h4M5 6.500h4M5 8.500h4" /></svg>
    </button>
    <button type="button" aria-label="Page break preview" className="flex h-full w-[41px] items-center justify-center">
      <svg width="14" height="13" viewBox="0 0 14 13" fill="none" stroke="#fff" shapeRendering="crispEdges"><path d="M.5.5h13v12H.5z" /><path d="M0 0h4v8H0zM5 0h4v8H5z" fill="#fff" stroke="none" /></svg>
    </button>
    <button type="button" aria-label="Zoom out" className="ml-[5px] flex w-[9px] justify-center"><span className="h-0.5 w-[9px] bg-white" /></button>
    <input
      type="range"
      aria-label="Zoom"
      min={0}
      max={100}
      defaultValue={50}
      className="mx-1 h-3.5 w-[125px] appearance-none bg-transparent bg-[linear-gradient(#fff,#fff)] bg-[length:100%_1px] bg-center bg-no-repeat [&::-webkit-slider-thumb]:h-3.5 [&::-webkit-slider-thumb]:w-[5px] [&::-webkit-slider-thumb]:appearance-none [&::-webkit-slider-thumb]:bg-white"
    />
    <button type="button" aria-label="Zoom in" className="flex w-3 justify-center">
      <svg width="12" height="12" viewBox="0 0 12 12" stroke="#fff" strokeWidth="2"><path d="M6 0v12M0 6h12" /></svg>
    </button>
    <span className="w-[60px] pr-[9px] text-right whitespace-nowrap">100 %</span>
  </footer>
);

export default function App() {
  return (
    <div className="relative flex h-screen flex-col overflow-hidden bg-white font-['Open_Sans','Noto_Sans',sans-serif]">
      <TitleBar />
      <TabBar />
      <Ribbon />
      <FormulaBar />
      <main className="flex min-h-0 flex-1">
        <Sheet />
        <VerticalScroll />
      </main>
      <SheetBar />
      <StatusBar />
      <div className="flex h-2 shrink-0 bg-[#1a292f] pl-[372px]"><span className="w-[61px] bg-[#4f5557]" /></div>

      <div aria-hidden="true" className="pointer-events-none absolute bottom-[22px] left-1/2 flex -translate-x-1/2 flex-col items-center text-[#b5b5b5]/40">
        <span className="font-['DejaVu_Sans'] text-[66px] leading-[72px] font-bold" dir="rtl">مستقل</span>
        <span className="text-[36px] leading-10 font-bold">mostaql.com</span>
      </div>
      <div aria-hidden="true" className="pointer-events-none absolute right-[88px] bottom-14 text-[#8a8a8a]/60">
        <p className="text-[24px] leading-9">Activate Windows</p>
        <p className="text-[17px] leading-6">Go to Settings to activate Windows.</p>
      </div>
    </div>
  );
}
